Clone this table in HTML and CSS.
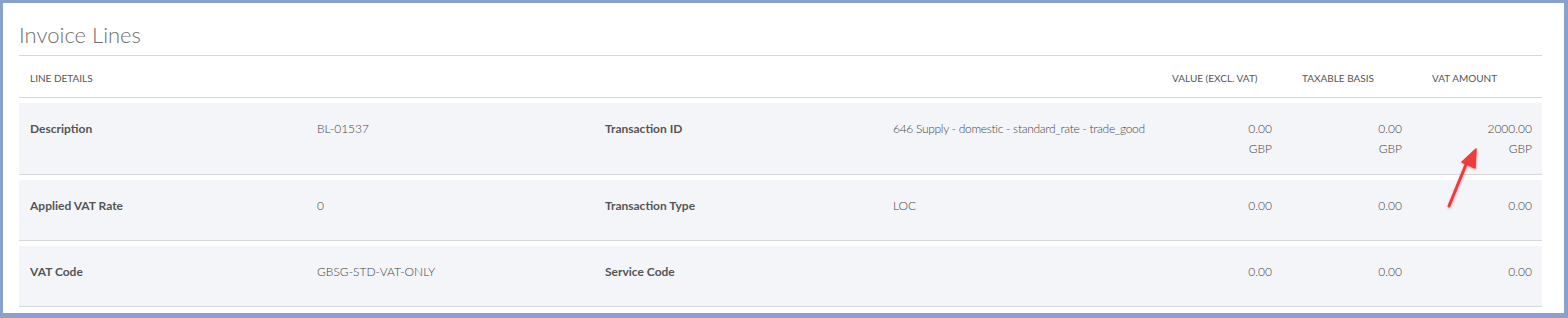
FILE: index.html
```html
<!DOCTYPE html>
<html>
<head>
<meta charset="utf-8">
<link rel="stylesheet" href="styles.css">
</head>
<body>
<div class="frame">
  <div class="panel">
    <h1 class="title">Invoice Lines</h1>
    <div class="grid head">
      <div class="span4">LINE DETAILS</div>
      <div class="hnum">VALUE (EXCL. VAT)</div>
      <div class="hnum">TAXABLE BASIS</div>
      <div class="hnum">VAT AMOUNT</div>
    </div>
    <div class="grid row">
      <div class="label">Description</div>
      <div class="val">BL-01537</div>
      <div class="label">Transaction ID</div>
      <div class="val long">646 Supply - domestic - standard_rate - trade_good</div>
      <div class="num">0.00<br>GBP</div>
      <div class="num">0.00<br>GBP</div>
      <div class="num">2000.00<br>GBP</div>
    </div>
    <div class="grid row">
      <div class="label">Applied VAT Rate</div>
      <div class="val">0</div>
      <div class="label">Transaction Type</div>
      <div class="val">LOC</div>
      <div class="num">0.00</div>
      <div class="num">0.00</div>
      <div class="num">0.00</div>
    </div>
    <div class="grid row">
      <div class="label">VAT Code</div>
      <div class="val">GBSG-STD-VAT-ONLY</div>
      <div class="label">Service Code</div>
      <div class="val"></div>
      <div class="num">0.00</div>
      <div class="num">0.00</div>
      <div class="num">0.00</div>
    </div>
  </div>
  <svg class="arrow" width="60" height="80" viewBox="0 0 60 80">
    <defs>
      <filter id="sh" x="-50%" y="-50%" width="200%" height="200%">
        <feDropShadow dx="0.5" dy="1" stdDeviation="1" flood-color="#000" flood-opacity="0.3"/>
      </filter>
    </defs>
    <g filter="url(#sh)">
      <line x1="16" y1="68" x2="34" y2="24" stroke="#ee3b3b" stroke-width="3" stroke-linecap="round"/>
      <polygon points="43,11 42,30 29,24" fill="#ee3b3b" stroke="#ee3b3b" stroke-width="1.5" stroke-linejoin="round"/>
    </g>
  </svg>
</div>
</body>
</html>
```
FILE: styles.css
```css
html, body {
  margin: 0;
  padding: 0;
  background: #fff;
}
.frame {
  position: relative;
  box-sizing: border-box;
  width: 1568px;
  height: 318px;
  border-style: solid;
  border-color: #8aa1cd;
  border-width: 3px 4px 5px 3px;
  padding: 0 22px 0 16px;
  background: #fff;
  font-family: Lato, "Liberation Sans", sans-serif;
}
.title {
  margin: 0;
  box-sizing: border-box;
  height: 53px;
  padding-top: 18px;
  font-size: 22px;
  line-height: 28px;
  font-weight: 300;
  color: #6f6f6f;
  border-bottom: 1px solid #d7d7d7;
}
.grid {
  display: grid;
  grid-template-columns: 287px 288px 288px 249px 130px 130px 130px;
  padding: 0 10px 0 11px;
}
.head {
  box-sizing: border-box;
  height: 42px;
  align-items: center;
  font-size: 10px;
  color: #555;
  border-bottom: 1px solid #d7d7d7;
  padding-top: 2px;
}
.span4 {
  grid-column: span 4;
}
.hnum {
  padding-left: 30px;
  white-space: nowrap;
}
.row {
  margin-top: 5px;
  background: #f4f5f9;
  border-bottom: 1px solid #d7d7d7;
  min-height: 61px;
  box-sizing: border-box;
  padding-top: 16px;
  padding-bottom: 15px;
  font-size: 12px;
  line-height: 20px;
  align-items: start;
}
.label {
  font-weight: 700;
  color: #555;
}
.val {
  color: #444;
  font-weight: 300;
  white-space: nowrap;
}
.long {
  letter-spacing: -0.3px;
}
.num {
  text-align: right;
  color: #444;
  font-weight: 300;
}
.arrow {
  position: absolute;
  left: 1430px;
  top: 135px;
}
```
